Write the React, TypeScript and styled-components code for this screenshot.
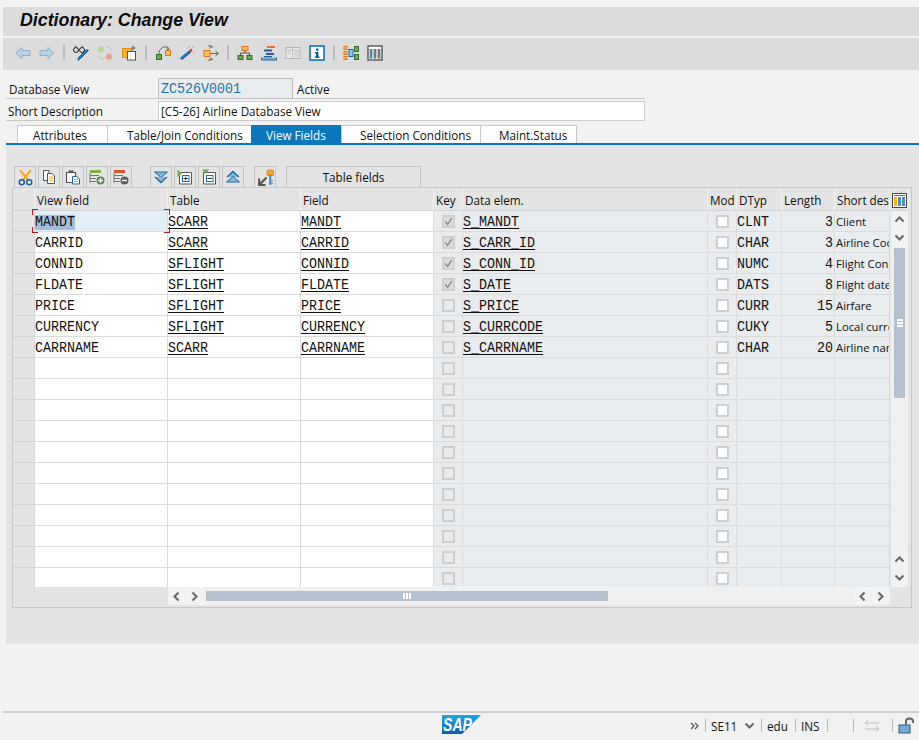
import React from "react";
import styled, { createGlobalStyle, css } from "styled-components";

const Global = createGlobalStyle`
  html, body { margin: 0; padding: 0; background: #f2f2f2; }
  * { box-sizing: border-box; }
`;
const UI = `"Open Sans", "Noto Sans", sans-serif`;
const MONO = `"Liberation Mono", monospace`;
const COLS = "21px 133px 133px 133px 29px 245px 29px 45px 53px 55px";

const Page = styled.div`
  width: 919px; height: 740px; overflow: hidden; display: flex; flex-direction: column;
  background: #f2f2f2; font-family: ${UI}; font-size: 11.7px; color: #111;
`;
const TitleBar = styled.div`
  margin: 7px 0 0 3px; height: 29px; background: #dcdcdc; padding-left: 17px;
  font: italic bold 17.8px/27px "Liberation Sans", sans-serif; color: #0c0c0c;
`;
const Toolbar = styled.div`
  margin: 2px 0 0 3px; height: 32px; background: #dcdcdc; padding: 0 0 3px 12px;
  display: flex; align-items: center; gap: 8px;
`;
const ToolSep = styled.span`width: 2px; height: 15px; background: #bcbcbc;`;
const Form = styled.div`
  margin: 8px 0 0 6px; width: 639px; display: flex; flex-direction: column; gap: 1px;
`;
const FormRow = styled.div`
  height: 21px; display: flex; border-bottom: 1px solid #c8c8c8;
`;
const FormLabel = styled.div<{ $pad: number }>`
  width: 152px; padding-left: ${p => p.$pad}px; line-height: 22px;
`;
const ReadBox = styled.div`
  width: 135px; height: 21px; background: #e8ecef; border: 1px solid #bdbdbd;
  line-height: 18px; color: #1f74ad; padding-left: 2px; overflow: hidden;
`;
const Status = styled.div`padding-left: 4px; line-height: 22px;`;
const TextBox = styled.div`
  flex: 1; height: 20px; margin-top: 1px; background: #fff; border: 1px solid #ccc; padding-left: 2px; line-height: 19px;
`;
const Tabs = styled.div`
  margin: 4px 0 0 6px; height: 20px; display: flex; padding-left: 11px;
  border-bottom: 2px solid #0a78bb;
`;
const Tab = styled.div<{ $w: number; $pad: number; $active?: boolean }>`
  width: ${p => p.$w}px; height: 18px; padding-left: ${p => p.$pad}px; line-height: 19px; background: #fff;
  border-top: 1px solid #c8c8c8; border-left: 1px solid #c8c8c8; white-space: nowrap;
  ${p => p.$active && css`background: #0a78bb; color: #fff; border-color: #0a78bb;`}
  &:last-child { border-right: 1px solid #c8c8c8; }
`;
const Panel = styled.div`
  margin-left: 6px; height: 499px; background: #e4e4e4; padding: 21px 0 0 6px;
`;
const TableTools = styled.div`
  height: 21px; display: flex; gap: 2px; padding-left: 2px;
`;
const ToolBtn = styled.div<{ $gap?: number }>`
  width: 22px; height: 21px; margin-left: ${p => p.$gap ?? 0}px; border: 1px solid #c4c4c4; border-bottom: 0;
  background: #e4e4e4; display: flex; align-items: center; justify-content: center;
`;
const TextBtn = styled(ToolBtn)`
  width: 135px;
`;
const Frame = styled.div`
  position: relative; width: 900px; height: 421px; border: 1px solid #c8c8c8; padding-left: 1px;
`;
const HeadRow = styled.div`
  display: grid; height: 23px; width: 894px; position: relative;
  grid-template-columns: ${COLS} 18px; border-bottom: 1px solid #d4d4d4;
`;
const HeadCell = styled.div`
  padding-left: 2px; line-height: 24px; white-space: nowrap; overflow: hidden; border-right: 1px solid #f0f0f0;
`;
const GridIcon = styled.div`position: absolute; left: 878px; top: 5px; width: 15px; height: 15px; display: flex;`;
const Body = styled.div`display: flex; height: 376px;`;
const Rows = styled.div`width: 876px; height: 376px; overflow: hidden; background: #fff;`;
const Row = styled.div`
  display: grid; grid-template-columns: ${COLS}; height: 21px;
`;
const RowHead = styled.div`background: #e4e4e4; border-bottom: 1px solid #d4d4d4; border-right: 1px solid #d8d8d8;`;
const Cell = styled.div<{ $tone?: "white" | "gray" | "sel"; $right?: boolean; $prop?: boolean; $center?: boolean }>`
  border-bottom: 1px solid #dcdcdc; border-right: 1px solid #dcdcdc; white-space: nowrap; overflow: hidden;
  line-height: 20px; color: #111;
  background: ${p => p.$tone === "gray" ? "#e8ecef" : p.$tone === "sel" ? "#e3eff8" : "#fff"};
  ${p => p.$right && css`text-align: right; padding-right: 1px;`}
  ${p => p.$prop && css`font-size: 11.3px; line-height: 21px; padding-left: 1px;`}
  ${p => p.$center && css`display: flex; align-items: center; justify-content: center;`}
`;
/* The reference's fixed font is tall and narrow: 8px advance with 11px capitals. */
const Mono = styled.span<{ $right?: boolean }>`
  display: inline-block; font: 15px/20px ${MONO}; transform: scaleX(.889);
  transform-origin: ${p => p.$right ? "right" : "left"} center; white-space: pre;
`;
const Link = styled(Mono)`text-decoration: underline; text-underline-offset: 2px; text-decoration-thickness: 1px;`;
const Marked = styled(Mono)`background: #a4bdd9; line-height: 15px;`;
const Check = styled.span<{ $white?: boolean; $on?: boolean }>`
  width: 13px; height: 13px; border: 2px solid #cfcfcf; display: flex; align-items: center; justify-content: center;
  background: ${p => p.$white ? "#fff" : p.$on ? "#dcdcdc" : "#e8ecef"};
`;
const Corner = styled.span<{ $v: "top" | "bottom"; $h: "left" | "right" }>`
  position: absolute; width: 6px; height: 6px; ${p => p.$v}: 0; ${p => p.$h}: 0;
  border-style: solid; border-color: #b02020; border-width: 0;
  border-${p => p.$v}-width: 1px; border-${p => p.$h}-width: 1px;
`;
const SelFrame = styled.div`position: absolute; left: 19px; top: 21px; width: 138px; height: 24px;`;
const VScroll = styled.div`
  width: 17px; height: 376px; margin-left: 1px; background: #f0f0f0; display: flex; flex-direction: column; align-items: center;
`;
const ScrollBtn = styled.div`
  width: 17px; height: 17px; margin-bottom: 1px; background: #f2f2f2; display: flex; align-items: center; justify-content: center; flex: none;
`;
const VThumb = styled.div`
  width: 11px; height: 150px; margin-top: 1px; background: #b5c1cc; display: flex; flex-direction: column; align-items: center; justify-content: center; gap: 1px;
`;
const Grip = styled.span<{ $v?: boolean }>`
  background: #fff; ${p => p.$v ? "width: 2px; height: 6px;" : "width: 6px; height: 2px;"}
`;
const Spacer = styled.div`flex: 1;`;
const HScroll = styled.div`
  height: 18px; margin-left: 154px; width: 722px; display: flex; align-items: center; background: #f0f0f0;
`;
const HBtn = styled.div`
  width: 17px; height: 18px; margin-right: 1px; background: #f2f2f2; display: flex; align-items: center; justify-content: center; flex: none;
`;
const HTrack = styled.div`flex: 1; height: 18px; display: flex; align-items: center; padding-left: 2px;`;
const HThumb = styled.div`
  width: 402px; height: 10px; background: #b5c1cc; display: flex; align-items: center; justify-content: center; gap: 1px;
`;
const StatusBar = styled.div`
  margin-left: 3px; height: 29px; border-top: 2px solid #cfcfcf; position: relative; display: flex; align-items: center; justify-content: flex-end;
  color: #111; padding-bottom: 2px;
`;
const Logo = styled.div`position: absolute; left: 439px; top: 2px; width: 40px; height: 20px; display: flex;`;
const StatusItem = styled.span<{ $w: number; $left?: number }>`
  width: ${p => p.$w}px; padding-left: ${p => p.$left ?? 0}px; display: flex; align-items: center; white-space: nowrap;
`;
const StatusSep = styled.span`width: 1px; height: 13px; background: #b8b8b8; flex: none; margin-right: 5px;`;

type P = { children: React.ReactNode; s?: number };
const Ic = ({ children, s = 16 }: P) => (
  <svg width={s} height={s} viewBox="0 0 16 16" style={{ display: "block", flex: "none" }} fill="none">{children}</svg>
);

const I = {
  back: <Ic><path d="M1 8 7 2.5V5.5H15V10.5H7V13.5Z" fill="#b9d2e4" stroke="#8db3cd" /></Ic>,
  fwd: <Ic><path d="M15 8 9 2.5V5.5H1V10.5H9V13.5Z" fill="#b9d2e4" stroke="#8db3cd" /></Ic>,
  glasses: <Ic>
    <circle cx="3" cy="5" r="2.5" stroke="#222" /><circle cx="9" cy="5" r="2.5" stroke="#222" />
    <path d="M5.5 5H6.5M1.5 2.5 3 .5M10.5 2.5 9 .5" stroke="#555" />
    <path d="M15.5 5.5 7.5 13.5 5 15.5 5.5 12.5 13.5 4.5Z" fill="#2a7ab8" stroke="#1b5c94" />
  </Ic>,
  circles: <Ic>
    <circle cx="4" cy="4.5" r="3.2" fill="#b7d79c" /><circle cx="12" cy="11.5" r="3.2" fill="#e7a692" />
    <path d="M9 2C12 1.5 14 3.5 14 6M7 14C4 14.5 2 12.5 2 10" stroke="#c4c4c4" />
  </Ic>,
  other: <Ic>
    <rect x="1.5" y="3.5" width="9" height="9" fill="#fcb817" stroke="#e88a2a" />
    <rect x="6.5" y="6.5" width="8" height="8.5" fill="#fff" stroke="#555" />
    <path d="M11 1 14 3 11 5M10 3H14" stroke="#666" />
  </Ic>,
  transport: <Ic>
    <rect x="1.5" y="9.5" width="5" height="5" fill="#6fa94f" stroke="#2f6b35" />
    <rect x="10.5" y="5.5" width="5" height="5" fill="#fbc35e" stroke="#e07a1f" />
    <path d="M4 9V6L8 2H13V5M11.5 3.5 13 5 14.5 3.5" stroke="#666" />
  </Ic>,
  wand: <Ic>
    <path d="M10 6 1.5 13 3 14.5 11.5 7.5Z" fill="#2a7ab8" stroke="#1b5c94" />
    <path d="M10 5.5 12 3.5 13.5 5.5 11.5 7.5Z" fill="#d63c2e" />
    <path d="M10 1.5V3M15 1 13.5 2.5M15.5 7.5 14 7" stroke="#e58a2a" />
  </Ic>,
  move: <Ic>
    <rect x="1" y="5.5" width="6" height="6" fill="#fbc35e" stroke="#e07a1f" />
    <path d="M7 8.5H15M12.5 6 15.5 8.5 12.5 11M5 1H9V3M9 1 6.5 3.5M5 15H9V13M9 15 6.5 12.5" stroke="#666" />
  </Ic>,
  tree: <Ic>
    <rect x="5" y="1.5" width="6" height="4" fill="#fbc35e" stroke="#e07a1f" />
    <path d="M8 5.5V8M3.5 10.5V8H12.5V10.5" stroke="#555" />
    <rect x="1" y="10.5" width="5" height="4" fill="#6fa94f" stroke="#2f6b35" />
    <rect x="10" y="10.5" width="5" height="4" fill="#6fa94f" stroke="#2f6b35" />
  </Ic>,
  stack: <Ic>
    <rect x="6" y="1" width="8" height="2" fill="#e8702a" />
    <rect x="3" y="4.5" width="8" height="2" fill="#2a5c98" />
    <rect x="5" y="8" width="8" height="2" fill="#2a5c98" />
    <rect x="3" y="11" width="8" height="1.5" fill="#2a5c98" />
    <path d="M.5 12.5V15H15.5V12.5" stroke="#1a6aa0" fill="#7fb0d0" />
  </Ic>,
  book: <Ic>
    <rect x="1" y="2.5" width="14" height="11" fill="#ececec" stroke="#b4b4b4" />
    <path d="M7.5 3V13M1 5H15M9 7H14M9 9H14M9 11H14M2.5 7H6M2.5 9H6" stroke="#bdbdbd" />
  </Ic>,
  info: <Ic>
    <rect x="1" y="1" width="14" height="14" fill="#fff" stroke="#0a78bb" strokeWidth="1.6" />
    <rect x="7" y="3.5" width="2.4" height="2.2" fill="#0a5f98" />
    <path d="M6 7H9.4V11.5H10.5V13H6V11.5H7V8.3H6Z" fill="#0a5f98" />
  </Ic>,
  graph: <Ic>
    <rect x="1" y="1.5" width="3" height="3" fill="#fbc35e" stroke="#e07a1f" />
    <rect x="1" y="6.5" width="3" height="3" fill="#fbc35e" stroke="#e07a1f" />
    <rect x="1" y="11.5" width="3" height="3" fill="#fbc35e" stroke="#e07a1f" />
    <rect x="6" y="4.5" width="4" height="7" fill="#9cc4e0" stroke="#1a6aa0" />
    <rect x="11.5" y="1.5" width="4" height="5" fill="#6fa94f" stroke="#2f6b35" />
    <rect x="11.5" y="9.5" width="4" height="5" fill="#6fa94f" stroke="#2f6b35" />
  </Ic>,
  columns: <Ic>
    <rect x="1" y="1" width="14" height="14" fill="#fff" stroke="#555" strokeWidth="1.4" />
    <rect x="2.6" y="4" width="2.8" height="9.6" fill="#4d86ad" />
    <rect x="6.6" y="4" width="2.8" height="9.6" fill="#777" />
    <rect x="10.6" y="4" width="2.8" height="9.6" fill="#777" />
  </Ic>,
  cut: <Ic s={17}>
    <path d="M3 1 10 10M13 1 6 10" stroke="#f0a52a" strokeWidth="2" />
    <circle cx="4.5" cy="12.5" r="2.4" stroke="#1f5f95" strokeWidth="1.4" />
    <circle cx="11.5" cy="12.5" r="2.4" stroke="#1f5f95" strokeWidth="1.4" />
  </Ic>,
  copy: <Ic>
    <path d="M2.5 1.5H8V11.5H2.5Z" fill="#fff" stroke="#555" />
    <path d="M6.5 4.5H11L13.5 7V14.5H6.5Z" fill="#fff" stroke="#555" />
    <path d="M8 8H12M8 10H12M8 12H12" stroke="#f0b020" />
  </Ic>,
  paste: <Ic>
    <path d="M1.5 3.5H10.5V13.5H1.5Z" fill="#fff" stroke="#555" strokeWidth="1.2" />
    <rect x="3.5" y="1.5" width="5" height="2.5" fill="#555" />
    <path d="M7.5 7.5H11.5L14.5 10V15H7.5Z" fill="#fff" stroke="#1f6aa0" />
    <path d="M9 10.5H13M9 12.5H13" stroke="#f0b020" />
  </Ic>,
  addRow: <Ic>
    <rect x="1" y="1" width="11" height="3" fill="#7cb342" />
    <path d="M1 6.5H10M1 9.5H7M1 12.5H7M1 4V14" stroke="#777" />
    <circle cx="11.5" cy="11.5" r="4" fill="#4c8c4a" /><path d="M9 11.5H14M11.5 9V14" stroke="#fff" strokeWidth="1.4" />
  </Ic>,
  delRow: <Ic>
    <rect x="1" y="1" width="11" height="3" fill="#d9562b" />
    <path d="M1 6.5H10M1 9.5H7M1 12.5H7M1 4V14" stroke="#777" />
    <circle cx="11.5" cy="11.5" r="4" fill="#5f5f5f" /><path d="M9 11.5H14" stroke="#fff" strokeWidth="1.4" />
  </Ic>,
  allDown: <Ic>
    <path d="M1.5 3H14.5L8 8.5Z" fill="#88b8d8" stroke="#1f6aa0" />
    <path d="M2 8 8 13.5 14 8" stroke="#1f6aa0" strokeWidth="1.3" fill="#88b8d8" />
  </Ic>,
  expand: <Ic>
    <path d="M2.5 3.5H14.5V15H2.5Z" fill="#fff" stroke="#555" />
    <path d="M.5 .5V8L5 4.5Z" fill="#6fa94f" />
    <rect x="5.5" y="6.5" width="6.5" height="6" stroke="#1f6aa0" />
    <path d="M6.5 9.5H11M8.7 7.5V11.5" stroke="#1f3f60" />
  </Ic>,
  collapse: <Ic>
    <path d="M2.5 3.5H14.5V15H2.5Z" fill="#fff" stroke="#555" />
    <path d="M1 .5H8L4.5 5Z" fill="#6fa94f" />
    <rect x="5.5" y="6.5" width="6.5" height="6" stroke="#1f6aa0" />
    <path d="M6.5 9.5H11" stroke="#1f3f60" />
  </Ic>,
  allUp: <Ic>
    <path d="M2 8 8 2.5 14 8" stroke="#1f6aa0" strokeWidth="1.3" fill="#88b8d8" />
    <path d="M1.5 13H14.5L8 7.5Z" fill="#88b8d8" stroke="#1f6aa0" />
  </Ic>,
  key: <Ic s={17}>
    <rect x="9.5" y="1" width="6" height="5" rx="1" fill="#f6a92c" stroke="#e8842a" />
    <path d="M12.5 6V15" stroke="#3f8fc4" strokeWidth="2" /><path d="M13.5 11H15M13.5 13.5H15" stroke="#3f8fc4" />
    <path d="M9 8 3 14M2 9V15H8" stroke="#555" strokeWidth="2" />
  </Ic>,
  palette: <svg width="15" height="15" viewBox="0 0 15 15" fill="none" style={{ display: "block" }}>
    <rect x=".5" y=".5" width="14" height="14" fill="#fff" stroke="#444" />
    <rect x="2" y="4" width="3" height="9" fill="#fcb817" />
    <rect x="6" y="4" width="3" height="9" fill="#4d8fc4" />
    <rect x="10" y="4" width="3" height="9" fill="#4d8fc4" />
    <path d="M2 2.5H13" stroke="#4d6f8c" />
  </svg>,
  tick: <svg width="11" height="11" viewBox="0 0 11 11" fill="none" style={{ display: "block" }}><path d="M1.5 5.5 4.3 9 9.5 1.5" stroke="#8a8a8a" strokeWidth="1.7" /></svg>,
  chev: (d: string) => <svg width="11" height="11" viewBox="0 0 11 11" fill="none" style={{ display: "block" }}><path d={d} stroke="#666" strokeWidth="2" /></svg>,
};
const UP = "M1.5 7.5 5.5 3.5 9.5 7.5";
const DOWN = "M1.5 3.5 5.5 7.5 9.5 3.5";
const LEFT = "M7.5 1.5 3.5 5.5 7.5 9.5";
const RIGHT = "M3.5 1.5 7.5 5.5 3.5 9.5";

const DATA: [string, string, string, boolean, string, string, string, string][] = [
  ["MANDT", "SCARR", "MANDT", true, "S_MANDT", "CLNT", "3", "Client"],
  ["CARRID", "SCARR", "CARRID", true, "S_CARR_ID", "CHAR", "3", "Airline Code"],
  ["CONNID", "SFLIGHT", "CONNID", true, "S_CONN_ID", "NUMC", "4", "Flight Connection"],
  ["FLDATE", "SFLIGHT", "FLDATE", true, "S_DATE", "DATS", "8", "Flight date"],
  ["PRICE", "SFLIGHT", "PRICE", false, "S_PRICE", "CURR", "15", "Airfare"],
  ["CURRENCY", "SFLIGHT", "CURRENCY", false, "S_CURRCODE", "CUKY", "5", "Local currency"],
  ["CARRNAME", "SCARR", "CARRNAME", false, "S_CARRNAME", "CHAR", "20", "Airline name"],
];
const rows = Array.from({ length: 18 }, (_, i) => DATA[i] ?? null);
const HEADS = ["", "View field", "Table", "Field", "Key", "Data elem.", "Mod", "DTyp", "Length", "Short des", ""];
const TABS: [string, number, number][] = [["Attributes", 90, 15], ["Table/Join Conditions", 144, 19], ["View Fields", 90, 14], ["Selection Conditions", 139, 18], ["Maint.Status", 97, 18]];

export default function App() {
  return (
    <Page>
      <Global />
      <TitleBar>Dictionary: Change View</TitleBar>
      <Toolbar>
        {I.back}{I.fwd}<ToolSep />
        {I.glasses}{I.circles}{I.other}<ToolSep />
        {I.transport}{I.wand}{I.move}<ToolSep />
        {I.tree}{I.stack}{I.book}{I.info}<ToolSep />
        {I.graph}{I.columns}
      </Toolbar>
      <Form>
        <FormRow>
          <FormLabel $pad={3}>Database View</FormLabel>
          <ReadBox><Mono>ZC526V0001</Mono></ReadBox>
          <Status>Active</Status>
        </FormRow>
        <FormRow>
          <FormLabel $pad={2}>Short Description</FormLabel>
          <TextBox>[C5-26] Airline Database View</TextBox>
        </FormRow>
      </Form>
      <Tabs>
        {TABS.map(([t, w, pad]) => <Tab key={t} $w={w} $pad={pad} $active={t === "View Fields"}>{t}</Tab>)}
      </Tabs>
      <Panel>
        <TableTools>
          <ToolBtn>{I.cut}</ToolBtn><ToolBtn>{I.copy}</ToolBtn><ToolBtn>{I.paste}</ToolBtn><ToolBtn>{I.addRow}</ToolBtn><ToolBtn>{I.delRow}</ToolBtn>
          <ToolBtn $gap={16}>{I.allDown}</ToolBtn><ToolBtn>{I.expand}</ToolBtn><ToolBtn>{I.collapse}</ToolBtn><ToolBtn>{I.allUp}</ToolBtn>
          <ToolBtn $gap={8}>{I.key}</ToolBtn>
          <TextBtn $gap={8}>Table fields</TextBtn>
        </TableTools>
        <Frame>
          <HeadRow>
            {HEADS.map((h, i) => <HeadCell key={i}>{h}</HeadCell>)}
            <GridIcon>{I.palette}</GridIcon>
          </HeadRow>
          <Body>
            <Rows>
              {rows.map((r, i) => (
                <Row key={i}>
                  <RowHead />
                  <Cell $tone={i === 0 ? "sel" : "white"}>{r && (i === 0 ? <Marked>{r[0]}</Marked> : <Mono>{r[0]}</Mono>)}</Cell>
                  <Cell>{r && <Link>{r[1]}</Link>}</Cell>
                  <Cell>{r && <Link>{r[2]}</Link>}</Cell>
                  <Cell $tone="gray" $center><Check $on={!!r && r[3]}>{r && r[3] && I.tick}</Check></Cell>
                  <Cell $tone="gray">{r && <Link>{r[4]}</Link>}</Cell>
                  <Cell $tone="gray" $center><Check $white /></Cell>
                  <Cell $tone="gray">{r && <Mono>{r[5]}</Mono>}</Cell>
                  <Cell $tone="gray" $right>{r && <Mono $right>{r[6]}</Mono>}</Cell>
                  <Cell $tone="gray" $prop>{r && r[7]}</Cell>
                </Row>
              ))}
            </Rows>
            <VScroll>
              <ScrollBtn>{I.chev(UP)}</ScrollBtn>
              <ScrollBtn>{I.chev(DOWN)}</ScrollBtn>
              <VThumb><Grip /><Grip /><Grip /></VThumb>
              <Spacer />
              <ScrollBtn>{I.chev(UP)}</ScrollBtn>
              <ScrollBtn>{I.chev(DOWN)}</ScrollBtn>
            </VScroll>
          </Body>
          <HScroll>
            <HBtn>{I.chev(LEFT)}</HBtn>
            <HBtn>{I.chev(RIGHT)}</HBtn>
            <HTrack><HThumb><Grip $v /><Grip $v /><Grip $v /></HThumb></HTrack>
            <HBtn>{I.chev(LEFT)}</HBtn>
            <HBtn>{I.chev(RIGHT)}</HBtn>
          </HScroll>
          <SelFrame>
            <Corner $v="top" $h="left" /><Corner $v="top" $h="right" />
            <Corner $v="bottom" $h="left" /><Corner $v="bottom" $h="right" />
          </SelFrame>
        </Frame>
      </Panel>
      <Spacer />
      <StatusBar>
        <Logo>
          <svg width="40" height="20" viewBox="0 0 40 20" style={{ display: "block" }}>
            <defs>
              <linearGradient id="sapg" x1="0" y1="0" x2="0" y2="1">
                <stop offset="0" stopColor="#1ea7e8" /><stop offset="1" stopColor="#0a5cae" />
              </linearGradient>
            </defs>
            <path d="M0 0H39L20 19H0Z" fill="url(#sapg)" />
            <text x="1" y="16" fontFamily="Liberation Sans" fontWeight="bold" fontStyle="italic" fontSize="18" fill="#fff" textLength="29" lengthAdjust="spacingAndGlyphs">SAP</text>
          </svg>
        </Logo>
        <StatusItem $w={15}>
          <svg width="10" height="10" viewBox="0 0 10 10" fill="none" style={{ display: "block" }}><path d="M1 2 4 5 1 8M5 2 8 5 5 8" stroke="#555" strokeWidth="1.2" /></svg>
        </StatusItem>
        <StatusSep />
        <StatusItem $w={33}>SE11</StatusItem>
        <StatusItem $w={17}>{I.chev(DOWN)}</StatusItem>
        <StatusSep />
        <StatusItem $w={28}>edu</StatusItem>
        <StatusSep />
        <StatusItem $w={26}>INS</StatusItem>
        <StatusSep />
        <StatusItem $w={20} />
        <StatusSep />
        <StatusItem $w={33} $left={5}>
          <svg width="16" height="14" viewBox="0 0 16 14" fill="none" style={{ display: "block" }}><path d="M1 4H15M4 1 1 4 4 7M1 10H15M12 7 15 10 12 13" stroke="#c0c0c0" /></svg>
        </StatusItem>
        <StatusSep />
        <StatusItem $w={21}>
          <svg width="17" height="17" viewBox="0 0 17 17" fill="none" style={{ display: "block" }}>
            <rect x="1" y="8" width="11" height="8" fill="#7fa9cc" stroke="#1f5f95" />
            <path d="M8 8V4C8 0.5 15 0.5 15 4V6" stroke="#666" strokeWidth="2" />
          </svg>
        </StatusItem>
      </StatusBar>
    </Page>
  );
}
